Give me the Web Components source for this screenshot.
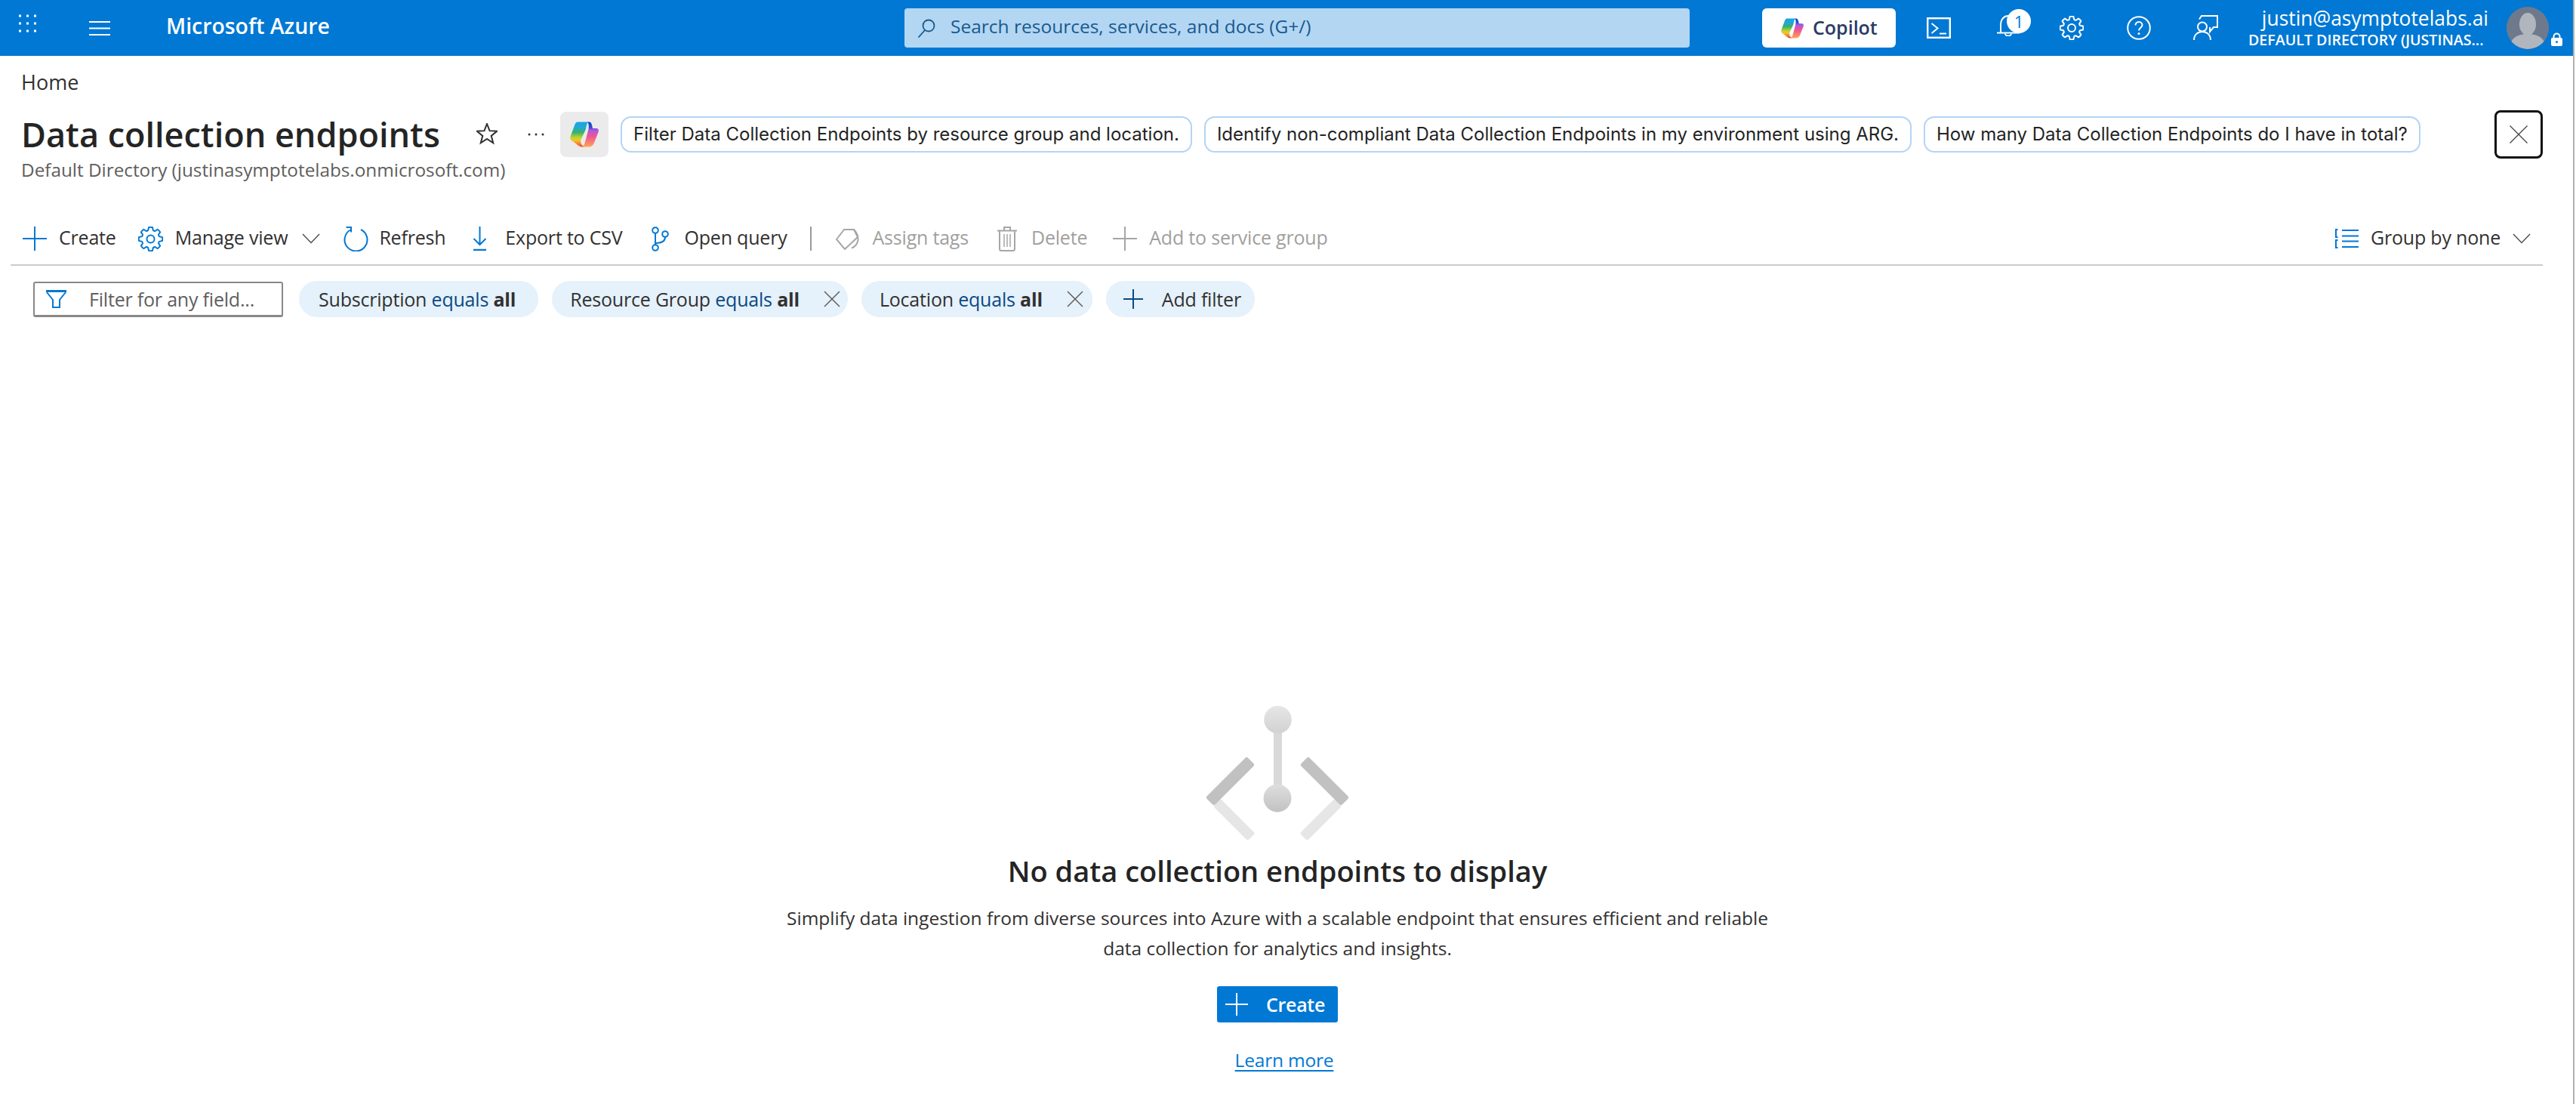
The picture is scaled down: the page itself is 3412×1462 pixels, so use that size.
<!DOCTYPE html>
<html><head><meta charset="utf-8"><style>
html,body{margin:0;background:#fff;overflow:hidden}
body{font-family:"Open Sans","Liberation Sans",sans-serif;color:#323130}
</style></head><body>
<az-app>
  <az-topbar></az-topbar>
  <az-header></az-header>
  <az-toolbar></az-toolbar>
  <az-filterbar></az-filterbar>
  <az-empty></az-empty>
</az-app>
<script>
function gearPath(cx,cy,ro,ri,teeth){
  let d='';const n=teeth,step=Math.PI*2/n;
  const p=(r,a)=>(cx+r*Math.cos(a)).toFixed(2)+' '+(cy+r*Math.sin(a)).toFixed(2);
  for(let i=0;i<n;i++){const a=i*step-Math.PI/2;
    d+=(i?'L':'M')+p(ri,a-step*.36)+'L'+p(ro,a-step*.2)+'Q'+p(ro+.6,a)+' '+p(ro,a+step*.2)+'L'+p(ri,a+step*.36)+'Q'+p(ri-.6,a+step*.5)+' '+p(ri,a+step*.64);}
  return d+'Z';
}
const COPILOT=(id)=>`<svg xmlns="http://www.w3.org/2000/svg" viewBox="0 0 38 34" style="display:block;width:100%;height:100%">
<defs><linearGradient id="${id}a" x1="0" y1="0" x2="0" y2="1"><stop offset="0" stop-color="#17a5ea"/><stop offset=".2" stop-color="#20a8d8"/><stop offset=".42" stop-color="#35b36b"/><stop offset=".62" stop-color="#b9d334"/><stop offset=".74" stop-color="#f7c32a"/><stop offset="1" stop-color="#ee4336"/></linearGradient>
<linearGradient id="${id}b" x1="0" y1="0" x2="0" y2="1"><stop offset="0" stop-color="#0d3fc4"/><stop offset=".24" stop-color="#2e54d6"/><stop offset=".32" stop-color="#b054e0"/><stop offset=".6" stop-color="#f0588f"/><stop offset="1" stop-color="#ffa552"/></linearGradient></defs>
<path fill="url(#${id}a)" d="M10 .5H24C22 3 21.5 7 21 10L14.5 24C13.5 27 14.5 31 19 33.5H15C11 33 8 29 5 27L2.5 25.5C.5 24 0 22 .5 20L6 5C7 2 8 .5 10 .5Z"/>
<path fill="url(#${id}b)" d="M23 .5H25C28 .5 29 3 30 9H34.5C37.5 9 38.5 11 37.5 14L32 28C30.5 32 28 33.5 25 33.5H16C18 33 19 30 20 27L24.5 10C25 6 25 2 23 .5Z"/></svg>`;
const svg=(w,h,vb,inner,extra='')=>`<svg xmlns="http://www.w3.org/2000/svg" width="${w}" height="${h}" viewBox="${vb}" fill="none" style="display:block;flex:none;${extra}">${inner}</svg>`;

class AzApp extends HTMLElement{constructor(){super();this.attachShadow({mode:'open'}).innerHTML=`<style>
:host{display:block;width:3408px;height:1462px;overflow:hidden;border-right:2px solid #b0b0b0;background:#fff}
</style><slot></slot>`}}

class AzTopbar extends HTMLElement{constructor(){super();
const dots=[26.5,36.5,46.5].flatMap(x=>[21,31,41].map(y=>`<rect x="${x-1.5}" y="${y-1.5}" width="3" height="3" fill="#fff"/>`)).join('');
this.attachShadow({mode:'open'}).innerHTML=`<style>
:host{display:flex;align-items:center;height:74px;background:#0078d4;color:#fff}
.grid{margin-left:24px}
.ham{margin-left:68px}
.brand{margin:0 0 6px 74px;font-weight:600;font-size:28.4px;line-height:40px;white-space:nowrap;width:217px}
.search{margin-left:761px;width:1040px;height:52px;background:#b3d6f2;border-radius:4px;display:flex;align-items:center;box-sizing:border-box;padding-left:17px;color:#18598f;font-size:24.5px;gap:20px;white-space:nowrap}
.search span{margin-bottom:6px}
.cop{margin-left:96px;width:177px;height:52px;border-radius:6px;background:#fff;display:flex;align-items:center;box-sizing:border-box;padding-left:25px;color:#2b3a63;font-weight:600;font-size:25px;gap:12px}
.cop span:last-child{margin-bottom:2px}
.copi{width:30px;height:27px;flex:none}
.term{margin-left:41px}
.bell{margin-left:61px;position:relative;width:45px;height:46px}
.bell svg{margin-top:6px}
.badge{position:absolute;left:13px;top:-2px;width:32px;height:32px;border-radius:50%;background:#fff;color:#0078d4;font-size:22px;line-height:32px;text-align:center}
.gear{margin-left:38px}
.help{margin-left:57px}
.fb{margin-left:55px}
.user{margin-left:40px;width:318px;text-align:right;flex:none}
.mail{font-size:26.4px;line-height:36px;white-space:nowrap;margin-top:-2px}
.dir{font-size:19.6px;font-weight:600;line-height:26px;white-space:nowrap;margin-right:7px;margin-top:-2px}
.avatar{margin-left:24px;width:56px;height:56px;border-radius:50%;background:#6e7a8c;overflow:hidden;flex:none}
</style>
<span class="grid">${svg(26,74,'24 0 26 74',dots)}</span>
<span class="ham">${svg(28,20,'0 0 28 20','<path d="M0 2H28M0 10.5H28M0 19H28" stroke="#fff" stroke-width="2"/>')}</span>
<span class="brand">Microsoft Azure</span>
<div class="search">${svg(24,25,'0 0 24 25','<circle cx="15" cy="9" r="7.5" stroke="#18598f" stroke-width="1.8"/><path d="M10 15L1.5 24.5" stroke="#18598f" stroke-width="1.8"/>')}<span>Search resources, services, and docs (G+/)</span></div>
<div class="cop"><span class="copi">${COPILOT('tc')}</span><span>Copilot</span></div>
<span class="term">${svg(32,28,'0 0 32 28','<rect x="1.2" y="1.2" width="29.6" height="25.6" stroke="#fff" stroke-width="2.4"/><path d="M6.5 8L14.5 14.5L6.5 21" stroke="#fff" stroke-width="2"/><path d="M17 21.5H26" stroke="#fff" stroke-width="2"/>')}</span>
<span class="bell">${svg(30,28,'0 0 30 28','<path d="M5 23V13C5 5 10 1 15 1S25 5 25 13" stroke="#fff" stroke-width="2"/><path d="M0 23.5H30" stroke="#fff" stroke-width="2"/><path d="M11 24.5a4 3 0 0 0 8 0" stroke="#fff" stroke-width="2"/>')}<span class="badge">1</span></span>
<span class="gear">${svg(32,32,'0 0 32 32',`<path d="${gearPath(16,16,15.2,11.6,8)}" stroke="#fff" stroke-width="2"/><circle cx="16" cy="16" r="5" stroke="#fff" stroke-width="2"/>`)}</span>
<span class="help">${svg(32,32,'0 0 32 32','<circle cx="16" cy="16" r="14.8" stroke="#fff" stroke-width="2"/><path d="M11.5 12.5C11.5 9.8 13.5 8 16 8S20.5 10 20.5 12.3C20.5 15.5 16 15.5 16 19.5" stroke="#fff" stroke-width="2"/><circle cx="16" cy="23.5" r="1.5" fill="#fff"/>')}</span>
<span class="fb">${svg(34,34,'0 0 34 34','<circle cx="13" cy="15.5" r="6" stroke="#fff" stroke-width="2"/><path d="M2 33C2 26 7 22 13 22S24 26 24 33" stroke="#fff" stroke-width="2"/><path d="M9 5.5L12 1H33V16H28L23 22V16" stroke="#fff" stroke-width="2"/>')}</span>
<div class="user"><div class="mail">justin@asymptotelabs.ai</div><div class="dir">DEFAULT DIRECTORY (JUSTINAS...</div></div>
<div class="avatar">${svg(56,56,'0 0 56 56','<ellipse cx="28" cy="23" rx="11" ry="15" fill="#b1b5bd"/><path d="M4 56C4 42 14 36 28 36S52 42 52 56Z" fill="#b1b5bd"/>')}</div>
${svg(15,18,'0 0 15 18','<path d="M3.5 8V5.5a4 4 0 0 1 8 0V8" stroke="#fff" stroke-width="2"/><rect x="0" y="7" width="15" height="11" rx="2" fill="#fff"/><circle cx="7.5" cy="12.5" r="1.5" fill="#0078d4"/>','margin-left:3px;margin-top:30px')}`}}

class AzChip extends HTMLElement{constructor(){super();this.attachShadow({mode:'open'}).innerHTML=`<style>
:host{display:flex;align-items:center;height:48px;box-sizing:border-box;border:2px solid #b3d4f5;border-radius:14px;padding:0 15px;font-family:Inter,"Open Sans",sans-serif;font-size:24px;color:#242424;white-space:nowrap;background:#fff;flex:none}
</style><slot></slot>`}}

class AzHeader extends HTMLElement{constructor(){super();
const pts=[];for(let i=0;i<10;i++){const r=i%2?6:14,a=-Math.PI/2+i*Math.PI/5;pts.push((14+r*Math.cos(a)).toFixed(2)+','+(15+r*Math.sin(a)).toFixed(2))}
this.attachShadow({mode:'open'}).innerHTML=`<style>
:host{display:block;padding:0 40px 0 28px}
.crumb{height:68px;padding-bottom:4px;display:flex;align-items:center;font-size:27px;color:#323130}
.row{display:flex;align-items:center;height:63px}
h1{margin:0;font-size:45px;font-weight:600;color:#242424;line-height:63px;width:554px;white-space:nowrap}
.star{margin-left:49px;width:28px}
.dots{margin-left:39px;width:24px}
.cbox{margin-left:20px;width:64px;height:60px;background:#ebebeb;border-radius:8px;display:flex;align-items:center;justify-content:center;flex:none}
.cbox span{width:38px;height:34px;display:block}
.chips{display:flex;gap:16px;margin-left:16px}
.close{margin-left:auto;width:64px;height:64px;box-sizing:border-box;border:3px solid #111;border-radius:8px;display:flex;align-items:center;justify-content:center;flex:none}
.sub{font-size:24.3px;color:#605e5c;height:32px;line-height:32px;white-space:nowrap}
</style>
<div class="crumb">Home</div>
<div class="row"><h1>Data collection endpoints</h1>
<span class="star">${svg(28,30,'0 0 28 30',`<polygon points="${pts.join(' ')}" stroke="#323130" stroke-width="2"/>`)}</span>
<span class="dots">${svg(24,6,'0 0 24 6','<circle cx="3" cy="3" r="1.5" fill="#323130"/><circle cx="12" cy="3" r="1.5" fill="#323130"/><circle cx="21" cy="3" r="1.5" fill="#323130"/>')}</span>
<div class="cbox"><span>${COPILOT('hc')}</span></div>
<div class="chips"><az-chip>Filter Data Collection Endpoints by resource group and location.</az-chip><az-chip>Identify non-compliant Data Collection Endpoints in my environment using ARG.</az-chip><az-chip>How many Data Collection Endpoints do I have in total?</az-chip></div>
<div class="close">${svg(24,24,'0 0 24 24','<path d="M.5 .5L23.5 23.5M23.5 .5L.5 23.5" stroke="#444" stroke-width="1.3"/>')}</div>
</div>
<div class="sub">Default Directory (justinasymptotelabs.onmicrosoft.com)</div>`}}

class AzCmd extends HTMLElement{constructor(){super();this.attachShadow({mode:'open'}).innerHTML=`<style>
:host{display:flex;align-items:center;gap:var(--g,16px);font-size:25px;letter-spacing:-.2px;color:#323130;white-space:nowrap;flex:none}
:host([off]){color:#a19f9d}
.t{margin-bottom:4px}
::slotted(svg){display:block;flex:none}
</style><slot name="i"></slot><span class="t"><slot></slot></span><slot name="e"></slot>`}}

class AzToolbar extends HTMLElement{constructor(){super();const B='#0078d4',G='#a6a6a6';
const ic=(w,h,vb,inner)=>`<svg slot="i" xmlns="http://www.w3.org/2000/svg" width="${w}" height="${h}" viewBox="${vb}" fill="none">${inner}</svg>`;
const chev=(ml)=>`<svg slot="e" style="margin-left:${ml}px" xmlns="http://www.w3.org/2000/svg" width="24" height="14" viewBox="0 0 24 14" fill="none"><path d="M1 1L12 12.5L23 1" stroke="#505050" stroke-width="1.5"/></svg>`;
this.attachShadow({mode:'open'}).innerHTML=`<style>
:host{display:flex;align-items:center;height:68px;margin:41px 40px 0 14px;padding:0 16px;border-bottom:2px solid #ccc}
.sep{width:2px;height:32px;background:#9a9a9a;flex:none}
</style>
<az-cmd>${ic(32,32,'0 0 32 32',`<path d="M16 0V32M0 16H32" stroke="${B}" stroke-width="2"/>`)}Create</az-cmd>
<az-cmd style="margin-left:29px">${ic(33,33,'0 0 33 33',`<path d="${gearPath(16.5,16.5,15.6,12,8)}" stroke="${B}" stroke-width="2"/><circle cx="16.5" cy="16.5" r="5" stroke="${B}" stroke-width="2"/>`)}Manage view${chev(3)}</az-cmd>
<az-cmd style="margin-left:31px;--g:14px">${ic(33,33,'0 0 33 33',`<path d="M9 4.5A15 15 0 1 0 23 4" stroke="${B}" stroke-width="2"/><path d="M3.5 1H10V7.5" stroke="${B}" stroke-width="2"/>`)}Refresh</az-cmd>
<az-cmd style="margin-left:36px;--g:24px">${ic(19,32,'0 0 19 32',`<path d="M9.5 0V24M1.5 16L9.5 24L17.5 16" stroke="${B}" stroke-width="2"/><path d="M1 31H18" stroke="${B}" stroke-width="2.5"/>`)}Export to CSV</az-cmd>
<az-cmd style="margin-left:38px;--g:21px">${ic(23,33,'0 0 23 33',`<circle cx="5" cy="5" r="3.8" stroke="${B}" stroke-width="2"/><circle cx="18" cy="10" r="3.8" stroke="${B}" stroke-width="2"/><circle cx="5" cy="28" r="3.8" stroke="${B}" stroke-width="2"/><path d="M5 9V24M5 22C12 22 18 20 18 14" stroke="${B}" stroke-width="2"/>`)}Open query</az-cmd>
<span class="sep" style="margin-left:30px"></span>
<az-cmd off style="margin-left:32px;--g:18px">${ic(31,29,'0 0 31 29',`<path d="M10 2H24Q30 8 29.5 16Q28 24 21 26.5" stroke="${G}" stroke-width="2"/><path d="M11 2L1 15L12 28L29 12L24 2Z" stroke="${G}" stroke-width="2"/>`)}Assign tags</az-cmd>
<az-cmd off style="margin-left:38px;--g:19px">${ic(26,33,'0 0 26 33',`<path d="M0 5.5H26M9 5V1H17V5" stroke="${G}" stroke-width="2"/><path d="M3 6V29.5Q3 32 5.5 32H20.5Q23 32 23 29.5V6" stroke="${G}" stroke-width="2"/><path d="M9 10V27M13 10V27M17 10V27" stroke="${G}" stroke-width="1.5"/>`)}Delete</az-cmd>
<az-cmd off style="margin-left:34px">${ic(32,32,'0 0 32 32',`<path d="M16 0V32M0 16H32" stroke="${G}" stroke-width="2"/>`)}Add to service group</az-cmd>
<az-cmd style="margin-left:auto">${ic(31,26,'0 0 31 26',`<path d="M3.5 1H1V11H3.5M3.5 15H1V25H3.5" stroke="${B}" stroke-width="2"/><path d="M9 2H31M9 9.5H31M9 16.5H31M9 24H31" stroke="${B}" stroke-width="2"/>`)}Group by none${chev(0)}</az-cmd>`}}

class AzPill extends HTMLElement{constructor(){super();
const x=this.hasAttribute('close');
this.attachShadow({mode:'open'}).innerHTML=`<style>
:host{display:flex;align-items:center;height:48px;border-radius:24px;background:#e5f1fb;font-size:25px;letter-spacing:-.2px;color:#323130;white-space:nowrap;padding:0 var(--pr,30px) 0 26px;flex:none;gap:32px}
:host([close]){padding:0 var(--pr,10px) 0 24px}
::slotted(b){font-weight:700}
::slotted(em){font-style:normal;color:#0b4a84}
</style><span><slot></slot></span>${x?svg(22,22,'0 0 22 22','<path d="M1 1L21 21M21 1L1 21" stroke="#605e5c" stroke-width="1.5"/>'):''}`}}

class AzFilterbar extends HTMLElement{constructor(){super();this.attachShadow({mode:'open'}).innerHTML=`<style>
:host{display:flex;align-items:center;margin:20px 0 0 44px;height:48px;gap:18px}
.box{width:331px;height:47px;box-sizing:border-box;border:2px solid #8a8886;border-bottom-width:3px;border-radius:3px;display:flex;align-items:center;padding-left:15px;gap:30px;color:#605e5c;font-size:25px;letter-spacing:-.2px;white-space:nowrap;flex:none;margin-right:3px}
.add{display:flex;align-items:center;gap:25px;height:48px;border-radius:24px;background:#e5f1fb;font-size:25px;letter-spacing:-.2px;padding:0 18px 0 23px;white-space:nowrap;flex:none}
</style>
<div class="box">${svg(27,24,'0 0 27 24','<path d="M0 1.5H27" stroke="#0078d4" stroke-width="3"/><path d="M1 3L9 13V23H18V13L26 3" stroke="#0078d4" stroke-width="2"/>')}<span>Filter for any field...</span></div>
<az-pill>Subscription <em>equals</em> <b>all</b></az-pill>
<az-pill close>Resource Group <em>equals</em> <b>all</b></az-pill>
<az-pill close style="--pr:12px">Location <em>equals</em> <b>all</b></az-pill>
<div class="add">${svg(26,26,'0 0 26 26','<path d="M13 0V26M0 13H26" stroke="#0b4a84" stroke-width="2"/>')}<span>Add filter</span></div>`}}

class AzEmpty extends HTMLElement{constructor(){super();
const bars=(m)=>`<g ${m?'transform="translate(3384 0) scale(-1 1)"':''}>
<rect x="-32.5" y="-7" width="65" height="14" rx="3" transform="translate(1634.5 1085.5) rotate(45)" fill="#e6e6e6"/>
<rect x="-38.5" y="-7.8" width="77" height="15.6" rx="3" transform="translate(1629.5 1034.5) rotate(-45)" fill="#c1c1c1"/></g>`;
this.attachShadow({mode:'open'}).innerHTML=`<style>
:host{display:flex;flex-direction:column;align-items:center;margin:514px 24px 0 0;text-align:center}
.art{display:block}
h2{margin:14px 0 0;font-size:38px;font-weight:600;line-height:50px;color:#242424;white-space:nowrap}
p{margin:18px 0 0;font-size:24.5px;line-height:40px;color:#323130;width:1340px}
.btn{margin-top:30px;width:160px;height:48px;box-sizing:border-box;background:#0078d4;border-radius:3px;color:#fff;display:flex;align-items:center;padding-left:11px;gap:24px;font-size:25px;font-weight:600;letter-spacing:-.3px}
a{margin:30px 0 0 18px;line-height:40px;font-size:24.5px;letter-spacing:-.2px;color:#0078d4;text-decoration:underline;text-underline-offset:4px}
</style>
<svg class="art" xmlns="http://www.w3.org/2000/svg" width="190" height="180" viewBox="1597 934 190 180" fill="none">
<defs><linearGradient id="t" x1="0" y1="0" x2="0" y2="1"><stop offset="0" stop-color="#e6e6e6"/><stop offset="1" stop-color="#d2d2d2"/></linearGradient>
<linearGradient id="u" x1="0" y1="0" x2="0" y2="1"><stop offset="0" stop-color="#dedede"/><stop offset="1" stop-color="#c2c2c2"/></linearGradient></defs>
<rect x="1687" y="968" width="11" height="78" fill="#d9d9d9"/>
<circle cx="1692.5" cy="953" r="18.3" fill="url(#t)"/><circle cx="1692" cy="1057" r="18.5" fill="url(#u)"/>
${bars(false)}${bars(true)}</svg>
<h2>No data collection endpoints to display</h2>
<p>Simplify data ingestion from diverse sources into Azure with a scalable endpoint that ensures efficient and reliable data collection for analytics and insights.</p>
<div class="btn">${svg(30,30,'0 0 30 30','<path d="M15 0V30M0 15H30" stroke="#fff" stroke-width="2"/>')}<span>Create</span></div>
<a>Learn more</a>`}}

customElements.define('az-app',AzApp);
customElements.define('az-topbar',AzTopbar);
customElements.define('az-chip',AzChip);
customElements.define('az-header',AzHeader);
customElements.define('az-cmd',AzCmd);
customElements.define('az-toolbar',AzToolbar);
customElements.define('az-pill',AzPill);
customElements.define('az-filterbar',AzFilterbar);
customElements.define('az-empty',AzEmpty);
</script></body></html>
